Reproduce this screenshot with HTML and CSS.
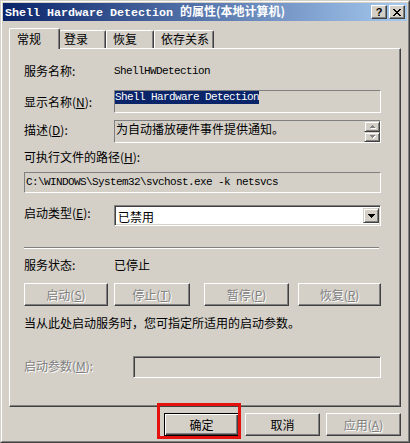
FILE: index.html
```html
<!DOCTYPE html>
<html lang="zh-CN">
<head>
<meta charset="utf-8">
<title>Shell Hardware Detection 的属性</title>
<link rel="stylesheet" href="styles.css">
</head>
<body>
<div class="window">
  <div class="frame">
    <div class="titlebar">
      <span class="title"><span class="mono-b">Shell Hardware Detection </span>的属性(本地计算机)</span>
      <div class="tbtns">
        <div class="tbtn help">?</div>
        <div class="tbtn close">
          <svg width="8" height="7" viewBox="0 0 8 7" shape-rendering="crispEdges">
            <rect x="0" y="0" width="2" height="1"/><rect x="6" y="0" width="2" height="1"/>
            <rect x="1" y="1" width="2" height="1"/><rect x="5" y="1" width="2" height="1"/>
            <rect x="2" y="2" width="4" height="1"/>
            <rect x="3" y="3" width="2" height="1"/>
            <rect x="2" y="4" width="4" height="1"/>
            <rect x="1" y="5" width="2" height="1"/><rect x="5" y="5" width="2" height="1"/>
            <rect x="0" y="6" width="2" height="1"/><rect x="6" y="6" width="2" height="1"/>
          </svg>
        </div>
      </div>
    </div>

    <div class="tabs">
      <div class="tab active t1">常规</div>
      <div class="tab t2">登录</div>
      <div class="tab t3">恢复</div>
      <div class="tab t4">依存关系</div>
    </div>

    <div class="panel">
      <div class="row r1">
        <div class="lbl">服务名称:</div>
        <div class="mono">ShellHWDetection</div>
      </div>

      <div class="row r2">
        <div class="lbl pt4">显示名称(<u>N</u>):</div>
        <div class="edit name-edit"><span class="sel mono">Shell Hardware Detection</span></div>
      </div>

      <div class="row r3">
        <div class="lbl pt2">描述(<u>D</u>):</div>
        <div class="edit desc-edit">
          <span class="desc-text">为自动播放硬件事件提供通知。</span>
          <div class="spin">
            <div class="sbtn"><svg width="5" height="3" viewBox="0 0 5 3" shape-rendering="crispEdges"><rect x="2" y="0" width="1" height="1"/><rect x="1" y="1" width="3" height="1"/><rect x="0" y="2" width="5" height="1"/></svg></div>
            <div class="sbtn"><svg width="5" height="3" viewBox="0 0 5 3" shape-rendering="crispEdges"><rect x="0" y="0" width="5" height="1"/><rect x="1" y="1" width="3" height="1"/><rect x="2" y="2" width="1" height="1"/></svg></div>
          </div>
        </div>
      </div>

      <div class="row r4">
        <div class="lbl wide">可执行文件的路径(<u>H</u>):</div>
      </div>

      <div class="row r5">
        <div class="edit path-edit mono">C:\WINDOWS\System32\svchost.exe -k netsvcs</div>
      </div>

      <div class="row r6">
        <div class="lbl">启动类型(<u>E</u>):</div>
        <div class="combo">
          <span class="combo-text">已禁用</span>
          <div class="dd">
            <svg width="7" height="4" viewBox="0 0 7 4" shape-rendering="crispEdges"><rect x="0" y="0" width="7" height="1"/><rect x="1" y="1" width="5" height="1"/><rect x="2" y="2" width="3" height="1"/><rect x="3" y="3" width="1" height="1"/></svg>
          </div>
        </div>
      </div>

      <div class="sep"></div>

      <div class="row r7">
        <div class="lbl">服务状态:</div>
        <div>已停止</div>
      </div>

      <div class="row r8">
        <div class="btn disabled b-start">启动(<u>S</u>)</div>
        <div class="btn disabled b-stop">停止(<u>T</u>)</div>
        <div class="btn disabled b-pause">暂停(<u>P</u>)</div>
        <div class="btn disabled b-resume">恢复(<u>R</u>)</div>
      </div>

      <div class="row r9">
        <div>当从此处启动服务时，您可指定所适用的启动参数。</div>
      </div>

      <div class="row r10">
        <div class="lbl lbl-param pt2 disabled-text">启动参数(<u>M</u>):</div>
        <div class="edit param-edit"></div>
      </div>
    </div>

    <div class="actions">
      <div class="btn default">确定</div>
      <div class="btn">取消</div>
      <div class="btn disabled">应用(<u>A</u>)</div>
    </div>
  </div>
  <div class="mark"></div>
</div>
</body>
</html>
```

FILE: styles.css
```css
* { box-sizing: border-box; }
html, body { margin: 0; padding: 0; background: #d4d0c8; }
body {
  font-family: "Noto Sans CJK SC", "Liberation Sans", sans-serif;
  font-size: 12px;
  line-height: 16px;
  color: #000;
}
u { text-decoration: underline; text-underline-offset: 1px; }

.window {
  position: relative;
  width: 410px;
  height: 443px;
  border: 1px solid;
  border-color: #d4d0c8 #404040 #404040 #d4d0c8;
  background: #d4d0c8;
}
.frame {
  height: 100%;
  border: 1px solid;
  border-color: #fff #808080 #808080 #fff;
  padding: 1px;
  display: flex;
  flex-direction: column;
}

/* title bar */
.titlebar {
  flex: none;
  height: 18px;
  display: flex;
  align-items: center;
  padding-left: 2px;
  background: linear-gradient(to right, #0a246a, #a6caf0);
  color: #fff;
  font-weight: bold;
}
.title { white-space: nowrap; font-size: 12px; line-height: 16px; }
.mono-b { font-family: "Liberation Mono", monospace; font-size: 11.67px; }
.tbtns { margin-left: auto; margin-right: 2px; display: flex; gap: 2px; }
.tbtn {
  width: 16px;
  height: 14px;
  background: #d4d0c8;
  border: 1px solid;
  border-color: #fff #404040 #404040 #fff;
  box-shadow: inset -1px -1px #808080;
  display: flex;
  align-items: center;
  justify-content: center;
  color: #000;
}
.tbtn.help {
  font-family: "Liberation Sans", sans-serif;
  font-size: 11px;
  font-weight: bold;
  line-height: 12px;
  padding-top: 0;
}
.tbtn svg { fill: #000; display: block; }

/* tabs */
.tabs {
  flex: none;
  height: 20px;
  margin-top: 7px;
  padding-left: 6px;
  display: flex;
  align-items: flex-end;
}
.tab {
  height: 18px;
  border-top: 1px solid #fff;
  border-left: 1px solid #fff;
  border-right: 1px solid #404040;
  box-shadow: inset -1px 0 #808080;
  border-radius: 2px 2px 0 0;
  padding-left: 6px;
  line-height: 16px;
  white-space: nowrap;
  background: #d4d0c8;
}
.tab.active {
  height: 21px;
  margin-bottom: -1px;
  padding-top: 2px;
  position: relative;
  z-index: 1;
}
.t1 { width: 51px; padding-left: 7px; }
.t2 { width: 46px; padding-left: 4px; border-left: none; }
.t3 { width: 48px; padding-left: 6px; }
.t4 { width: 60px; padding-left: 6px; }

/* panel */
.panel {
  flex: none;
  height: 359px;
  margin: 0 6px;
  border: 1px solid;
  border-color: #fff #404040 #404040 #fff;
  box-shadow: inset -1px -1px #808080;
  padding: 0 19px 0 14px;
  display: flex;
  flex-direction: column;
}
.row { display: flex; flex: none; white-space: nowrap; }
.lbl { width: 90px; flex: none; }
.lbl.wide { width: auto; }
.lbl-param { width: 109px; }
.pt4 { padding-top: 4px; }
.pt2 { padding-top: 2px; }

.r1 { margin-top: 14px; height: 16px; }
.r2 { margin-top: 11px; height: 23px; }
.r3 { margin-top: 7px; height: 23px; }
.r4 { margin-top: 6px; height: 16px; }
.r5 { margin-top: 7px; height: 21px; }
.r6 { margin-top: 12px; height: 21px; }
.sep {
  flex: none;
  margin-top: 21px;
  margin-right: 2px;
  height: 2px;
  border-top: 1px solid #808080;
  border-bottom: 1px solid #fff;
}
.r7 { margin-top: 8px; height: 16px; }
.r8 { margin-top: 10px; height: 23px; }
.r9 { margin-top: 9px; height: 16px; }
.r10 { margin-top: 25px; height: 22px; }

.mono {
  font-family: "Liberation Mono", monospace;
  font-size: 11px;
  letter-spacing: -0.6px;
}

.edit {
  flex: 1;
  border: 1px solid;
  border-color: #808080 #fff #fff #808080;
  background: #d4d0c8;
}
.sel {
  display: inline-block;
  vertical-align: top;
  height: 13px;
  line-height: 13px;
  background: #0a246a;
  color: #fff;
}
.desc-edit { display: flex; justify-content: space-between; }
.desc-text { padding-left: 1px; line-height: 16px; padding-top: 0; }
.spin { width: 16px; display: flex; flex-direction: column; padding-top: 0; }
.sbtn {
  flex: 1;
  background: #d4d0c8;
  border: 1px solid;
  border-color: #d4d0c8 #404040 #404040 #d4d0c8;
  box-shadow: inset 1px 1px #fff, inset -1px -1px #808080;
  display: flex;
  align-items: center;
  justify-content: center;
}
.sbtn svg { fill: #808080; display: block; filter: drop-shadow(1px 1px 0 #fff); }

.path-edit { line-height: 19px; padding-left: 1px; }

.combo {
  flex: 1;
  background: #fff;
  border: 1px solid;
  border-color: #808080 #fff #fff #808080;
  box-shadow: inset 1px 1px #404040, inset -1px -1px #d4d0c8;
  padding: 2px 1px 2px 3px;
  display: flex;
  align-items: stretch;
}
.combo-text { flex: 1; line-height: 17px; }
.dd {
  width: 16px;
  background: #d4d0c8;
  border: 1px solid;
  border-color: #d4d0c8 #404040 #404040 #d4d0c8;
  box-shadow: inset 1px 1px #fff, inset -1px -1px #808080;
  display: flex;
  align-items: center;
  justify-content: center;
}
.dd svg { fill: #000; display: block; }

/* buttons */
.btn {
  flex: none;
  width: 75px;
  height: 23px;
  background: #d4d0c8;
  border: 1px solid;
  border-color: #fff #404040 #404040 #fff;
  box-shadow: inset -1px -1px #808080;
  display: flex;
  align-items: center;
  justify-content: center;
}
.btn.disabled, .disabled-text { color: #808080; text-shadow: 1px 1px 0 #fff; }
.btn.default {
  border-color: #000;
  box-shadow: inset 1px 1px #fff, inset -1px -1px #404040, inset -2px -2px #808080;
}
.b-start { width: 84px; }
.b-stop { width: 76px; margin-left: 6px; }
.b-pause { width: 85px; margin-left: 14px; }
.b-resume { width: 83px; margin-left: 9px; }

.param-edit {
  box-shadow: inset 1px 1px #404040, inset -1px -1px #d4d0c8;
}

.actions {
  flex: none;
  margin-top: 6px;
  padding-right: 6px;
  display: flex;
  justify-content: flex-end;
  gap: 6px;
}

/* red annotation box */
.mark {
  position: absolute;
  left: 156px;
  top: 402px;
  width: 84px;
  height: 36px;
  border: 3px solid #e3120f;
  pointer-events: none;
}
```
